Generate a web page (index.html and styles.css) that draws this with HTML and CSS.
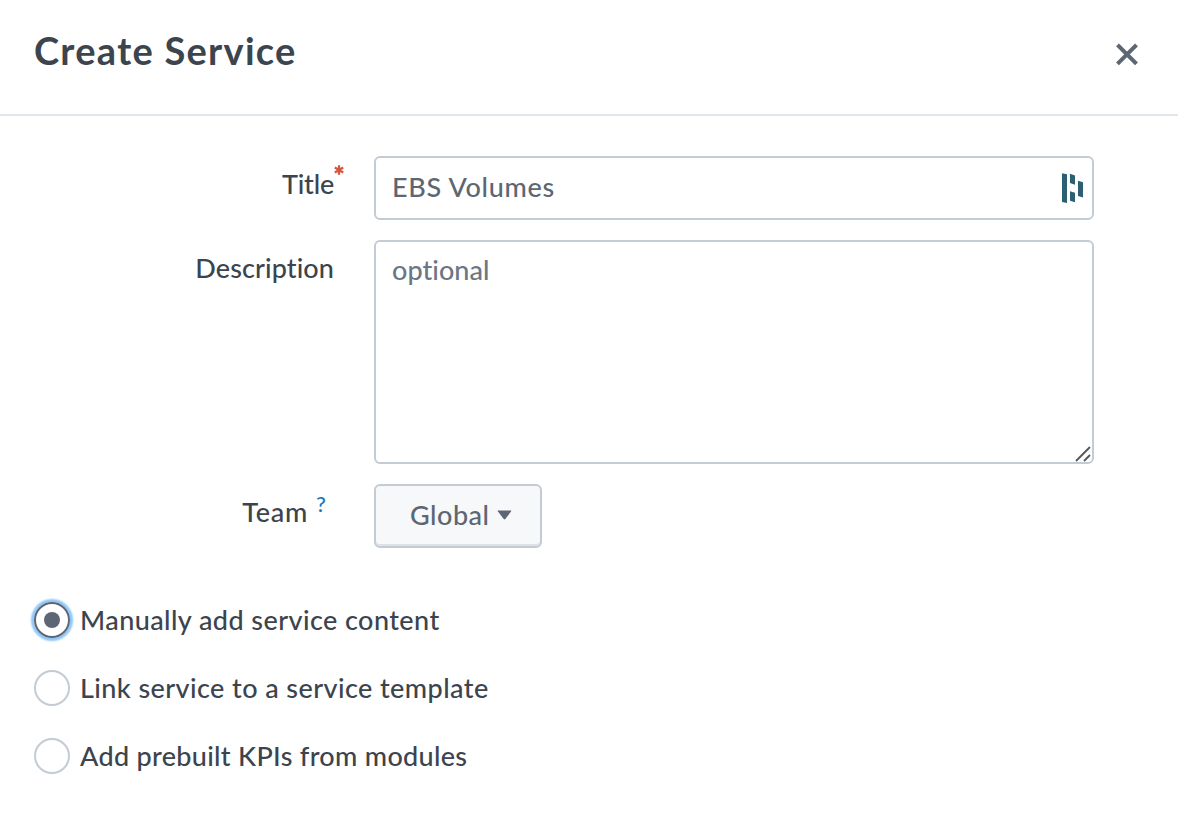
FILE: index.html
```html
<!DOCTYPE html>
<html lang="en">
<head>
<meta charset="utf-8">
<title>Create Service</title>
<link rel="stylesheet" href="styles.css">
</head>
<body>
<main class="modal">
  <header class="modal-header">
    <h1 class="modal-title">Create Service</h1>
    <button class="close" type="button" aria-label="Close">
      <svg width="24" height="24" viewBox="0 0 24 24"><path d="M2.5 2.9 21.5 21.9M21.5 2.9 2.5 21.9" fill="none" stroke="#5c6773" stroke-width="4.1" stroke-linecap="butt"/></svg>
    </button>
  </header>
  <form class="form">
    <div class="row">
      <label class="label" for="title"><span class="t-title">Title</span><svg class="required" width="10" height="10" viewBox="0 0 10 10"><path d="M5 .2v9.6M.8 2.6l8.4 4.8M9.2 2.6.8 7.4" stroke="#d6563c" stroke-width="2.3" fill="none"/></svg></label>
      <div class="field">
        <input class="input t-value" id="title" type="text" value="EBS Volumes">
        <svg class="manager" width="22" height="30" viewBox="0 0 22 30" fill="#2d5f73"><path d="M0 .2 5 1.2V30L0 28.9zM8 .7l5 1.8v9.3L8 10zM16 7.8l5 1.4v15.2L16 22.9zM8 18.2l5 1.6v9.5L8 27.7z"/></svg>
      </div>
    </div>
    <div class="row">
      <label class="label" for="description"><span class="t-description">Description</span></label>
      <div class="field">
        <textarea class="input textarea t-optional" id="description" placeholder="optional"></textarea>
        <svg class="grip" width="16" height="16" viewBox="0 0 16 16"><path d="M1 15 15 1M9 15l6-6" stroke="#55585b" stroke-width="1.9" fill="none"/></svg>
      </div>
    </div>
    <div class="row">
      <div class="label label-team"><span class="t-team">Team</span><a class="help">?</a></div>
      <button class="select" type="button"><span class="t-global">Global</span><svg class="caret" width="15" height="10" viewBox="0 0 15 10"><path d="M1.1.5h12.8q.8 0 .3.8L8.3 9.1q-.8.8-1.6 0L.8 1.3Q.3.5 1.1.5z" fill="#5c6773"/></svg></button>
    </div>
    <div class="options">
      <label class="option"><span class="radio radio-on"></span><span class="t-manual">Manually add service content</span></label>
      <label class="option"><span class="radio"></span><span class="t-link">Link service to a service template</span></label>
      <label class="option"><span class="radio"></span><span class="t-kpi">Add prebuilt KPIs from modules</span></label>
    </div>
  </form>
</main>
</body>
</html>
```
FILE: styles.css
```css
* { box-sizing: border-box; }
body {
  margin: 0;
  background: #fff;
  color: #3c444d;
  font: 500 27px/28px Lato, "Open Sans", sans-serif;
  font-variant-ligatures: none;
}
.modal { height: 820px; overflow: hidden; }
.modal-header {
  display: flex;
  justify-content: space-between;
  height: 116px;
  padding: 27px 39px 0 34px;
  border-bottom: 2px solid #e1e6eb;
}
.modal-title { margin: 0; font-size: 38px; line-height: 46px; font-weight: 700; letter-spacing: 1.28px; white-space: nowrap; }
.close { width: 24px; height: 24px; margin-top: 15px; padding: 0; border: 0; background: none; }
.close svg { display: block; }
.form { padding-top: 40px; }
.row { display: flex; margin-bottom: 20px; }
.label {
  position: relative;
  width: 334px;
  margin-right: 40px;
  padding-top: 14px;
  text-align: right;
}
.label span, .option span { white-space: nowrap; }
.t-title { letter-spacing: -0.2px; }
.t-description { letter-spacing: 0.1px; }
.t-team { letter-spacing: 0.7px; }
.t-global { letter-spacing: 0.5px; }
.t-value.input { letter-spacing: 0.7px; }
.t-optional { letter-spacing: 0.05px; }
.t-manual { letter-spacing: 0.43px; }
.t-link { letter-spacing: 0.42px; }
.t-kpi { letter-spacing: 0.31px; }
.required { position: absolute; left: 334px; top: 9px; }
.label-team { width: 308px; margin-right: 66px; }
.help {
  position: absolute;
  left: 316px;
  top: 9px;
  font-size: 22px;
  line-height: 22px;
  color: #1e74bc;
}
.field { position: relative; width: 720px; }
.input {
  display: block;
  width: 100%;
  height: 64px;
  margin: 0;
  padding: 0 50px 4px 16px;
  border: 2px solid #c3cbd4;
  border-radius: 6px;
  outline: 0;
  background: #fff;
  color: #5c6773;
  font: inherit;
  font-variant-ligatures: none;
}
.textarea { height: 224px; padding: 14px 16px; resize: none; }
.textarea::placeholder { color: #6b7785; opacity: 1; }
.manager { position: absolute; left: 688px; top: 17px; }
.grip { position: absolute; right: 3px; bottom: 2px; }
.select {
  display: flex;
  align-items: center;
  width: 168px;
  height: 64px;
  padding: 0 0 3px 34px;
  border: 2px solid #c3cbd4;
  border-radius: 6px;
  background: #f7f8fa;
  box-shadow: inset 0 -2px 0 #dfe2e5;
  color: #5c6773;
  font: inherit;
}
.caret { margin-left: 7px; }
.options { display: grid; gap: 32px; padding: 34px 0 0 34px; }
.option { display: flex; align-items: center; gap: 10px; height: 36px; }
.radio {
  display: grid;
  place-items: center;
  width: 36px;
  height: 36px;
  border: 2px solid #c3cbd4;
  border-radius: 50%;
}
.radio-on { border-color: #5c6773; box-shadow: 0 0 2px 3px #8cc6fb; }
.radio-on::after { content: ""; width: 16px; height: 16px; border-radius: 50%; background: #5c6773; }
```
